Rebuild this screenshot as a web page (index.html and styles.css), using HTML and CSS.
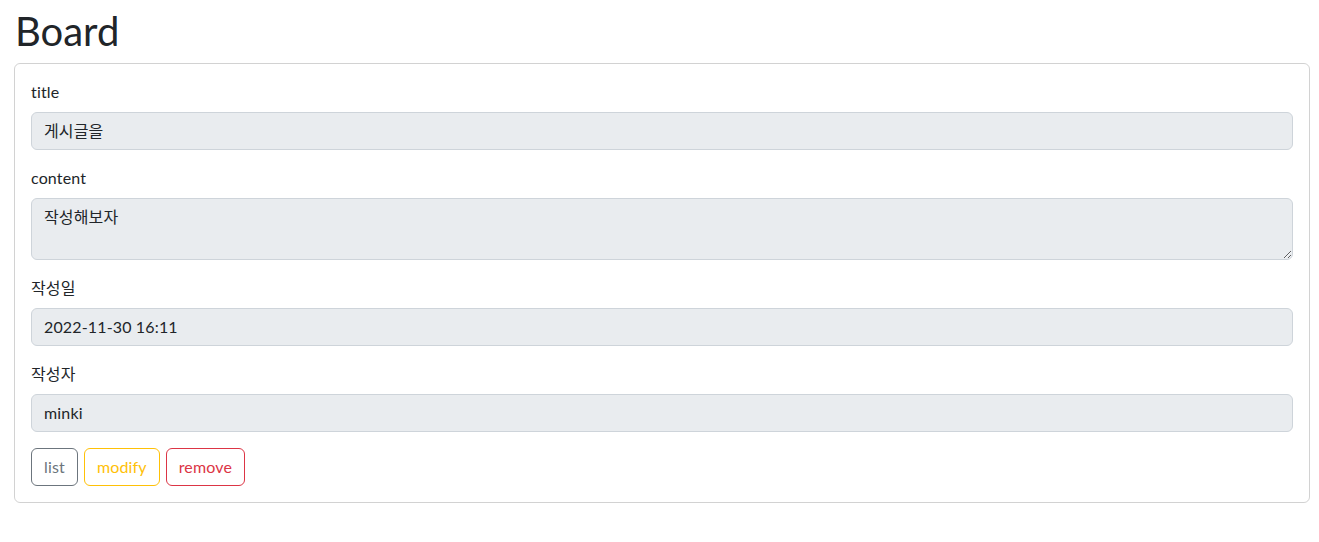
FILE: index.html
```html
<!DOCTYPE html>
<html lang="ko">
<head>
<meta charset="utf-8">
<title>Board</title>
<link rel="stylesheet" href="styles.css">
</head>
<body>
<div class="page">
  <h1 class="title">Board</h1>
  <div class="card">
    <div class="field">
      <label class="label">title</label>
      <input class="control" type="text" value="게시글을" readonly>
    </div>
    <div class="field">
      <label class="label">content</label>
      <textarea class="control area" rows="2" readonly>작성해보자</textarea>
    </div>
    <div class="field">
      <label class="label">작성일</label>
      <input class="control" type="text" value="2022-11-30 16:11" readonly>
    </div>
    <div class="field">
      <label class="label">작성자</label>
      <input class="control" type="text" value="minki" readonly>
    </div>
    <div class="actions">
      <button class="btn btn-secondary" type="button">list</button>
      <button class="btn btn-warning" type="button">modify</button>
      <button class="btn btn-danger" type="button">remove</button>
    </div>
  </div>
</div>
</body>
</html>
```
FILE: styles.css
```css
* { box-sizing: border-box; }
html, body {
  margin: 0;
  background: #fff;
}
body {
  font-family: "Lato", "Noto Sans CJK KR", sans-serif;
  font-size: 16px;
  line-height: 1.5;
  color: #212529;
  letter-spacing: 0.15px;
}
.page {
  padding: 7px 9px 0 14px;
}
.title {
  margin: 0 0 8px 0;
  font-size: 40px;
  font-weight: 400;
  line-height: 1.2;
  padding-left: 1px;
  letter-spacing: 0;
}
.card {
  border: 1px solid rgba(0, 0, 0, 0.175);
  border-radius: 6px;
  padding: 16px;
}
.field {
  margin-bottom: 16px;
}
.label {
  display: block;
  margin-bottom: 8px;
  line-height: 24px;
}
.control {
  display: block;
  width: 100%;
  margin: 0;
  padding: 6px 12px;
  font: inherit;
  font-size: 16px;
  line-height: 24px;
  letter-spacing: 0.15px;
  color: #212529;
  background: #e9ecef;
  border: 1px solid #ced4da;
  border-radius: 6px;
  outline: none;
}
.area {
  height: 62px;
  resize: vertical;
}
.actions {
  display: flex;
  gap: 6px;
}
.btn {
  font: inherit;
  font-size: 16px;
  line-height: 24px;
  letter-spacing: 0.15px;
  padding: 6px 12px;
  background: transparent;
  border: 1px solid;
  border-radius: 6px;
  cursor: pointer;
}
.btn-secondary { color: #6c757d; border-color: #6c757d; }
.btn-warning { color: #ffc107; border-color: #ffc107; }
.btn-danger { color: #dc3545; border-color: #dc3545; }
```
